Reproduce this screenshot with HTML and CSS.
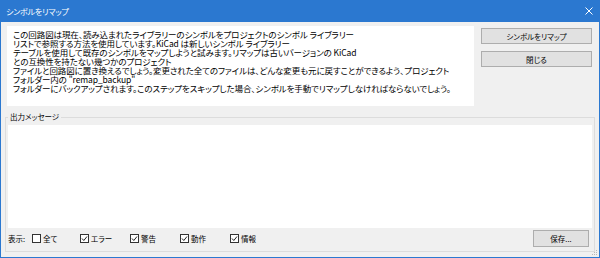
FILE: index.html
```html
<!DOCTYPE html>
<html lang="ja">
<head>
  <meta charset="UTF-8" />
  <title>シンボルをリマップ</title>
  <link rel="stylesheet" href="styles.css">
</head>
<body>
  <div class="window">
    <div class="titlebar">
      <span class="title">シンボルをリマップ</span>
      <svg class="close" width="8" height="8" viewBox="0 0 8 8"><path d="M0.5 0.5 L7.5 7.5 M7.5 0.5 L0.5 7.5" stroke="#fff" stroke-width="1" fill="none"/></svg>
    </div>

    <div class="dialog">
      <!-- 説明 + ボタン -->
      <div class="top">
        <div class="message">
          <div>この回路図は現在、読み込まれたライブラリーのシンボルをプロジェクトのシンボル ライブラリー</div>
          <div>リストで参照する方法を使用しています。KiCad は新しいシンボル ライブラリー</div>
          <div>テーブルを使用して既存のシンボルをマップしようと試みます。リマップは古いバージョンの KiCad</div>
          <div>との互換性を持たない幾つかのプロジェクト</div>
          <div>ファイルと回路図に置き換えるでしょう。変更された全てのファイルは、どんな変更も元に戻すことができるよう、プロジェクト</div>
          <div>フォルダー内の "remap_backup"</div>
          <div>フォルダーにバックアップされます。このステップをスキップした場合、シンボルを手動でリマップしなければならないでしょう。</div>
        </div>
        <div class="actions">
          <button>シンボルをリマップ</button>
          <button>閉じる</button>
        </div>
      </div>

      <!-- 出力 -->
      <fieldset class="output">
        <legend>出力メッセージ</legend>
        <div class="log"></div>
        <div class="filters">
          <span class="show">表示:</span>
          <label class="check"><svg width="9" height="9" viewBox="0 0 9 9"><rect x="0.5" y="0.5" width="8" height="8" fill="#fff" stroke="#333"/></svg>全て</label>
          <label class="check"><svg width="9" height="9" viewBox="0 0 9 9"><rect x="0.5" y="0.5" width="8" height="8" fill="#fff" stroke="#333"/><path d="M2 4.5 L3.8 6.5 L7 2.5" stroke="#222" fill="none"/></svg>エラー</label>
          <label class="check"><svg width="9" height="9" viewBox="0 0 9 9"><rect x="0.5" y="0.5" width="8" height="8" fill="#fff" stroke="#333"/><path d="M2 4.5 L3.8 6.5 L7 2.5" stroke="#222" fill="none"/></svg>警告</label>
          <label class="check"><svg width="9" height="9" viewBox="0 0 9 9"><rect x="0.5" y="0.5" width="8" height="8" fill="#fff" stroke="#333"/><path d="M2 4.5 L3.8 6.5 L7 2.5" stroke="#222" fill="none"/></svg>動作</label>
          <label class="check"><svg width="9" height="9" viewBox="0 0 9 9"><rect x="0.5" y="0.5" width="8" height="8" fill="#fff" stroke="#333"/><path d="M2 4.5 L3.8 6.5 L7 2.5" stroke="#222" fill="none"/></svg>情報</label>
          <button class="save">保存...</button>
        </div>
      </fieldset>
    </div>

    <svg class="grip" width="6" height="6" viewBox="0 0 6 6">
      <rect x="4" y="0" width="1" height="1" fill="#b8b8b8"/>
      <rect x="2" y="2" width="1" height="1" fill="#b8b8b8"/>
      <rect x="4" y="2" width="1" height="1" fill="#b8b8b8"/>
      <rect x="0" y="4" width="1" height="1" fill="#b8b8b8"/>
      <rect x="2" y="4" width="1" height="1" fill="#b8b8b8"/>
      <rect x="4" y="4" width="1" height="1" fill="#b8b8b8"/>
    </svg>
  </div>
</body>
</html>
```

FILE: styles.css
```css
html, body { margin:0; background:#fff; }
body { font-family:"Noto Sans CJK JP", sans-serif; font-feature-settings:"palt"; color:#000; }

.window { position:relative; width:600px; height:258px; box-sizing:border-box; border:1px solid #2b78d0; border-top:none; background:#f0f0f0; }

/* タイトルバー */
.titlebar { height:22px; background:#2b78d0; display:flex; align-items:center; justify-content:space-between; padding:0 5px 0 5px; }
.title { color:#fff; font-size:8px; letter-spacing:-0.2px; }
.close { margin-right:1px; }

/* 上段 */
.top { display:flex; padding:4px 0 0 6px; }
.message { width:467px; height:80px; box-sizing:border-box; background:#fff; padding:4px 6px; font-size:8.5px; line-height:9px; white-space:nowrap; overflow:hidden; letter-spacing:-0.1px; }
.actions { display:flex; flex-direction:column; gap:7px; margin:2px 0 0 7px; width:111px; }
button { font-family:inherit; font-feature-settings:"palt"; font-size:7.5px; color:#000; background:#e1e1e1; border:1px solid #adadad; border-radius:0; padding:0; height:16px; cursor:pointer; }

/* 出力メッセージ */
.output { margin:6px 4px 0 4px; padding:3px 2px 4px 2px; border:1px solid #dcdcdc; }
.output legend { font-size:7.5px; line-height:10px; padding:0 2px; }
.log { height:103px; background:#fff; }

.filters { display:flex; align-items:center; margin-top:2px; height:17px; font-size:7.5px; }
.show { width:24px; }
.check { display:flex; align-items:center; gap:2px; width:50px; }
.check:nth-of-type(1) { width:48px; }
.save { margin-left:auto; margin-right:3px; width:56px; height:17px; }

.grip { position:absolute; right:1px; bottom:1px; }
```
